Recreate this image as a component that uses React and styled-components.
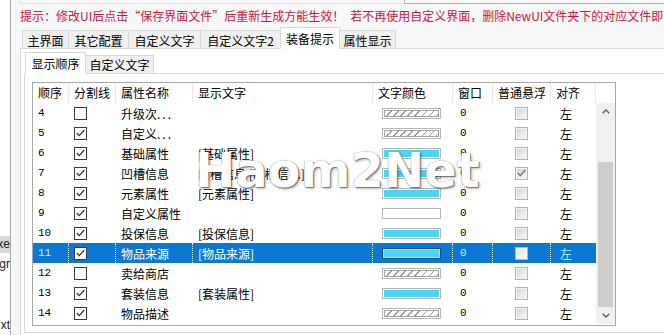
import React from "react";
import styled, { createGlobalStyle, css } from "styled-components";

const CJK = `"Noto Sans CJK SC", "Liberation Sans", sans-serif`;
const MONO = `"Liberation Mono", "DejaVu Sans Mono", monospace`;

const GlobalStyle = createGlobalStyle`
  html, body { margin: 0; padding: 0; background: #fff; }
  body { font-family: ${CJK}; font-size: 12px; color: #000; }
  * { box-sizing: border-box; }
`;

const Screen = styled.div`
  position: relative;
  display: flex;
  width: 664px;
  height: 335px;
  overflow: hidden;
  background: #fff;
`;

/* bit of the window behind the dialog */
const SideStrip = styled.div`
  width: 11px;
  flex-shrink: 0;
  border-right: 1px solid #a9a9a9;
  display: flex;
  flex-direction: column;
  padding-top: 236px;
`;

const Fragment = styled.div`
  width: 10px;
  height: 17px;
  margin-top: ${(p) => p.$gap || 0}px;
  display: flex;
  justify-content: flex-end;
  overflow: hidden;
  line-height: 17px;
  font-family: "Liberation Sans", sans-serif;
  font-size: 12px;
  color: #222;
  background: ${(p) => (p.$hl ? "#d9d9d9" : "transparent")};
  span { flex-shrink: 0; white-space: nowrap; }
`;

const Dialog = styled.div`
  flex: 1;
  min-width: 0;
  display: flex;
  flex-direction: column;
  background: #f7f7f7;
  padding-left: 9px;
`;

const TopEdge = styled.div`
  display: flex;
  height: 4px;
  flex-shrink: 0;
`;

const EdgeSeg = styled.div`
  flex: ${(p) => (p.$w ? "none" : 1)};
  width: ${(p) => (p.$w ? `${p.$w}px` : "auto")};
  border-left: 1px solid ${(p) => p.$c};
  border-bottom: 1px solid ${(p) => p.$c};
`;

const Hint = styled.div`
  height: 24px;
  flex-shrink: 0;
  line-height: 24px;
  color: #d0143c;
  font-size: 12px;
  white-space: nowrap;
  overflow: hidden;
`;

const HintGap = styled.span`
  display: inline-block;
  width: 6px;
`;

const TabStrip = styled.div`
  display: flex;
  align-items: flex-end;
  flex-shrink: 0;
  height: ${(p) => p.$h}px;
  padding-left: ${(p) => p.$pad}px;
  border-bottom: 1px solid #d9d9d9;
`;

const Tab = styled.div`
  position: relative;
  width: ${(p) => p.$w}px;
  height: ${(p) => p.$h}px;
  margin-bottom: -1px;
  margin-left: -1px;
  &:first-child { margin-left: 0; }
  padding-top: ${(p) => p.$top}px;
  border: 1px solid #d9d9d9;
  background: #f0f0f0;
  text-align: center;
  line-height: 16px;
  font-size: 12px;
  white-space: nowrap;
  ${(p) =>
    p.$active &&
    css`
      z-index: 1;
      background: #fff;
      border-bottom-color: #fff;
    `}
`;

const OuterPage = styled.div`
  flex: 1;
  display: flex;
  flex-direction: column;
  background: #fff;
  border-left: 1px solid #d9d9d9;
  padding: 2px 0 0 3px;
`;

const InnerPage = styled.div`
  height: 259px;
  background: #fff;
  border-left: 1px solid #d9d9d9;
  border-bottom: 1px solid #d9d9d9;
  padding: 8px 0 0 7px;
`;

const Table = styled.div`
  width: 584px;
  height: 244px;
  border: 1px solid #a8a8a8;
  display: flex;
  flex-direction: column;
  background: #fff;
`;

const HeaderRow = styled.div`
  display: flex;
  height: 20px;
  flex-shrink: 0;
`;

const HeaderCell = styled.div`
  width: ${(p) => p.$w}px;
  flex-shrink: 0;
  padding-left: 5px;
  border-right: 1px solid #e5e5e5;
  line-height: 20px;
  font-size: 12px;
  white-space: nowrap;
`;

const Body = styled.div`
  display: flex;
  height: 221px;
`;

const Rows = styled.div`
  width: 563px;
  display: flex;
  flex-direction: column;
`;

const Row = styled.div`
  display: flex;
  height: 20px;
  background: ${(p) => (p.$sel ? "#0b78d3" : "transparent")};
  color: ${(p) => (p.$sel ? "#fff" : "#000")};
`;

const Cell = styled.div`
  width: ${(p) => p.$w}px;
  flex-shrink: 0;
  display: flex;
  align-items: center;
  padding-left: ${(p) => p.$pad}px;
  border-right: 1px ${(p) => (p.$sel ? "dotted #d6efff" : "solid transparent")};
  font-size: 12px;
  white-space: nowrap;
  overflow: hidden;
`;

const Num = styled.span`
  font-family: ${MONO};
  font-size: 11px;
  color: ${(p) => (p.$sel ? "#c4efff" : "#000")};
`;

const Align = styled.span`
  color: ${(p) => (p.$sel ? "#a6ecff" : "#000")};
`;

const Dots = styled.span`
  letter-spacing: 2px;
`;

const Box = styled.div`
  width: 13px;
  height: 13px;
  display: flex;
  align-items: center;
  justify-content: center;
  border: 1px solid #3a3a3a;
  background: #fff;
  ${(p) =>
    p.$disabled &&
    css`
      border-color: #b3b3b3;
      background: linear-gradient(135deg, #cfcfcf 0%, #e9e9e9 55%, #f6f6f6 100%);
      box-shadow: inset 0 0 0 1px #f4f4f4;
    `}
  ${(p) =>
    p.$disabled &&
    p.$sel &&
    css`
      background: linear-gradient(135deg, #e2e2e2, #fbfbfb);
    `}
`;

const Swatch = styled.div`
  width: 59px;
  height: 11px;
  display: flex;
  padding: 1px;
  border: 1px solid #b7b7b7;
  background: #fff;
  ${(p) =>
    p.$sel &&
    css`
      border-color: #1d4d72;
      background: #8fe6f7;
    `}
`;

const SwatchFill = styled.div`
  flex: 1;
  ${(p) =>
    p.$kind === "cyan" &&
    css`
      background: #4bd5f0;
    `}
  ${(p) =>
    p.$kind === "hatch" &&
    css`
      border: 1px solid #a3a3a3;
      background: repeating-linear-gradient(
        135deg,
        #fff 0px,
        #fff 4px,
        #9c9c9c 4px,
        #9c9c9c 5px
      );
    `}
`;

const ScrollBar = styled.div`
  width: 19px;
  display: flex;
  flex-direction: column;
  background: #f0f0f0;
`;

const ScrollArrow = styled.div`
  height: 17px;
  display: flex;
  align-items: center;
  justify-content: center;
`;

const ScrollSpace = styled.div`
  height: ${(p) => p.$h}px;
`;

const ScrollThumb = styled.div`
  height: 145px;
  margin: 0 2px;
  background: #cdcdcd;
`;

const Watermark = styled.div`
  position: absolute;
  left: 195px;
  top: 146px;
  font-family: "DejaVu Sans", "Liberation Sans", sans-serif;
  font-weight: bold;
  font-size: 48px;
  line-height: 1;
  color: #fff;
  text-shadow: 0 0 1px rgba(0, 0, 0, 0.55), 1px 1px 1px rgba(0, 0, 0, 0.4),
    2px 2px 3px rgba(0, 0, 0, 0.22);
  white-space: nowrap;
  pointer-events: none;
`;

const COLS = [
  { title: "顺序", w: 36 },
  { title: "分割线", w: 47 },
  { title: "属性名称", w: 77 },
  { title: "显示文字", w: 180 },
  { title: "文字颜色", w: 80 },
  { title: "窗口", w: 40 },
  { title: "普通悬浮", w: 58 },
  { title: "对齐", w: 45 },
];

const ROWS = [
  { n: 4, split: false, name: "升级次", dots: true, text: "", color: "hatch" },
  { n: 5, split: true, name: "自定义", dots: true, text: "", color: "hatch" },
  { n: 6, split: true, name: "基础属性", text: "[基础属性]", color: "cyan" },
  { n: 7, split: true, name: "凹槽信息", text: "凹槽信息 [凹槽信息]", color: "cyan", float: true },
  { n: 8, split: true, name: "元素属性", text: "[元素属性]", color: "cyan" },
  { n: 9, split: true, name: "自定义属性", text: "", color: "white" },
  { n: 10, split: true, name: "投保信息", text: "[投保信息]", color: "cyan" },
  { n: 11, split: true, name: "物品来源", text: "[物品来源]", color: "cyan", sel: true },
  { n: 12, split: false, name: "卖给商店", text: "", color: "hatch" },
  { n: 13, split: true, name: "套装信息", text: "[套装属性]", color: "cyan" },
  { n: 14, split: true, name: "物品描述", text: "", color: "hatch" },
];

const MAIN_TABS = [
  { label: "主界面", w: 47 },
  { label: "其它配置", w: 61 },
  { label: "自定义文字", w: 73 },
  { label: "自定义文字2", w: 81 },
  { label: "装备提示", w: 60, active: true },
  { label: "属性显示", w: 57 },
];

const SUB_TABS = [
  { label: "显示顺序", w: 61, active: true },
  { label: "自定义文字", w: 69 },
];

const Check = ({ color = "#333" }) => (
  <svg width="9" height="8" viewBox="0 0 9 8">
    <polyline points="0.8,4 3.3,6.6 8.3,1" fill="none" stroke={color} strokeWidth="1.2" />
  </svg>
);

const Chevron = ({ down }) => (
  <svg width="8" height="5" viewBox="0 0 8 5">
    <polyline
      points={down ? "0.7,0.8 4,4 7.3,0.8" : "0.7,4.2 4,1 7.3,4.2"}
      fill="none"
      stroke="#606060"
      strokeWidth="1.4"
    />
  </svg>
);

const ItemRow = ({ row }) => {
  const s = row.sel;
  return (
    <Row $sel={s}>
      <Cell $w={36} $pad={5} $sel={s}>
        <Num $sel={s}>{row.n}</Num>
      </Cell>
      <Cell $w={47} $pad={5} $sel={s}>
        <Box>{row.split && <Check />}</Box>
      </Cell>
      <Cell $w={77} $pad={5} $sel={s}>
        {row.name}
        {row.dots && <Dots>...</Dots>}
      </Cell>
      <Cell $w={180} $pad={5} $sel={s}>
        {row.text}
      </Cell>
      <Cell $w={80} $pad={9} $sel={s}>
        <Swatch $sel={s}>
          <SwatchFill $kind={row.color} />
        </Swatch>
      </Cell>
      <Cell $w={40} $pad={7} $sel={s}>
        <Num $sel={s}>0</Num>
      </Cell>
      <Cell $w={58} $pad={22} $sel={s}>
        <Box $disabled $sel={s}>
          {row.float && <Check color="#6a6a6a" />}
        </Box>
      </Cell>
      <Cell $w={45} $pad={9}>
        <Align $sel={s}>左</Align>
      </Cell>
    </Row>
  );
};

export default function App() {
  return (
    <Screen>
      <GlobalStyle />
      <SideStrip>
        <Fragment $hl>
          <span>xe</span>
        </Fragment>
        <Fragment $gap={3}>
          <span>gr</span>
        </Fragment>
        <Fragment $gap={44}>
          <span>xt</span>
        </Fragment>
      </SideStrip>

      <Dialog>
        <TopEdge>
          <EdgeSeg $w={384} $c="#e3e3e3" />
          <EdgeSeg $c="#b3b3b3" />
        </TopEdge>

        <Hint>
          提示：修改UI后点击“保存界面文件”后重新生成方能生效！
          <HintGap />
          若不再使用自定义界面，删除NewUI文件夹下的对应文件即可
        </Hint>

        <TabStrip $h={21} $pad={2}>
          {MAIN_TABS.map((t) => (
            <Tab key={t.label} $w={t.w} $h={t.active ? 22 : 19} $top={t.active ? 3 : 2} $active={t.active}>
              {t.label}
            </Tab>
          ))}
        </TabStrip>

        <OuterPage>
          <TabStrip $h={23} $pad={1}>
            {SUB_TABS.map((t) => (
              <Tab key={t.label} $w={t.w} $h={t.active ? 22 : 19} $top={t.active ? 3 : 1} $active={t.active}>
                {t.label}
              </Tab>
            ))}
          </TabStrip>

          <InnerPage>
            <Table>
              <HeaderRow>
                {COLS.map((c) => (
                  <HeaderCell key={c.title} $w={c.w}>
                    {c.title}
                  </HeaderCell>
                ))}
              </HeaderRow>
              <Body>
                <Rows>
                  {ROWS.map((r) => (
                    <ItemRow key={r.n} row={r} />
                  ))}
                </Rows>
                <ScrollBar>
                  <ScrollArrow>
                    <Chevron />
                  </ScrollArrow>
                  <ScrollSpace $h={42} />
                  <ScrollThumb />
                  <ScrollArrow>
                    <Chevron down />
                  </ScrollArrow>
                </ScrollBar>
              </Body>
            </Table>
          </InnerPage>
        </OuterPage>
      </Dialog>

      <Watermark>Haom2Net</Watermark>
    </Screen>
  );
}
